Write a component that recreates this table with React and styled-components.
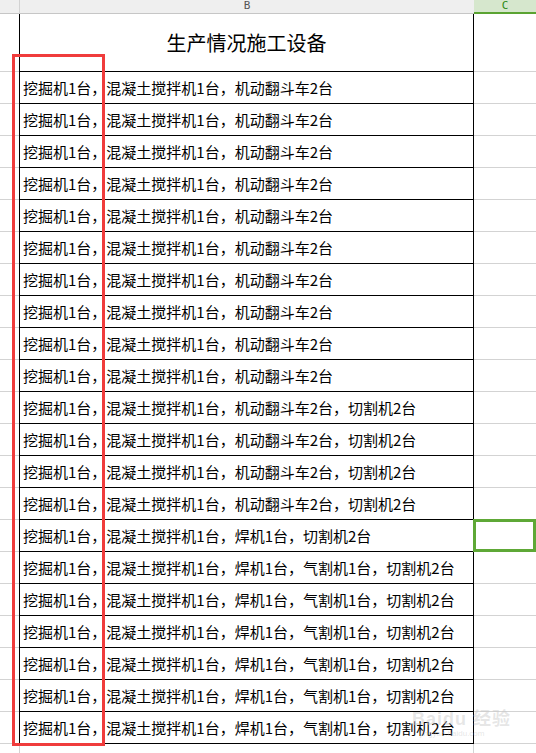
import React from "react";
import styled, { createGlobalStyle } from "styled-components";

const Global = createGlobalStyle`
  html, body { margin: 0; padding: 0; background: #fff; overflow: hidden; }
  body { width: 536px; height: 753px; }
`;

const Sheet = styled.div`
  position: relative;
  width: 536px;
  height: 753px;
  overflow: hidden;
  background: #fff;
  font-family: "Noto Sans CJK SC", "Liberation Sans", sans-serif;
`;

const Row = styled.div`
  display: grid;
  grid-template-columns: 19px 455px 1fr;
  height: ${(p) => p.$h}px;
`;

const HeadCell = styled.div`
  background: ${(p) => (p.$active ? "#d6e7cd" : "#efefef")};
  border-bottom: ${(p) => (p.$active ? "2px solid #5aa332" : "1px solid #c6c6c6")};
  border-left: ${(p) => (p.$divider ? "1px solid #d2d2d2" : "none")};
  color: ${(p) => (p.$active ? "#2f8a16" : "#555")};
  font-family: "DejaVu Sans Mono", "Liberation Mono", monospace;
  font-size: 11px;
  line-height: 12px;
  display: flex;
  justify-content: center;
  align-items: flex-start;
`;

const SideCell = styled.div`
  border-bottom: 1px solid ${(p) => (p.$last ? "transparent" : "#d3d3d3")};
  position: relative;
`;

const MainCell = styled.div`
  border-left: 1px solid ${(p) => (p.$ghost ? "#d3d3d3" : "#000")};
  border-right: 1px solid ${(p) => (p.$ghost ? "#d3d3d3" : "#000")};
  border-bottom: 1px solid ${(p) => (p.$ghost ? "transparent" : "#000")};
  display: flex;
  align-items: center;
  justify-content: ${(p) => (p.$title ? "center" : "flex-start")};
  padding-left: ${(p) => (p.$title ? "0" : "3px")};
  font-size: ${(p) => (p.$title ? "20px" : "15px")};
  color: #000;
  white-space: nowrap;
  overflow: hidden;
  letter-spacing: 0;
`;

const Selected = styled.div`
  position: absolute;
  left: -1px;
  top: -1px;
  right: 0;
  bottom: -1px;
  border: 3px solid #5ea836;
  pointer-events: none;
`;

const Highlight = styled.div`
  position: absolute;
  left: 12px;
  top: 54px;
  width: 87px;
  height: 686px;
  border: 3px solid #f03c3c;
  pointer-events: none;
`;

const Watermark = styled.div`
  position: absolute;
  left: 412px;
  top: 710px;
  color: rgba(200, 200, 200, 0.45);
  font-family: "Liberation Sans", "Noto Sans CJK SC", sans-serif;
  pointer-events: none;
  line-height: 1;
`;

const Mark = styled.div`
  font-size: 18px;
  font-weight: bold;
  letter-spacing: 1px;
`;

const MarkSub = styled.div`
  font-size: 8px;
  margin-top: 2px;
  margin-left: 8px;
`;

const base = "挖掘机1台，混凝土搅拌机1台，";
const rows = [
  ...Array(10).fill(base + "机动翻斗车2台"),
  ...Array(4).fill(base + "机动翻斗车2台，切割机2台"),
  base + "焊机1台，切割机2台",
  ...Array(6).fill(base + "焊机1台，气割机1台，切割机2台"),
];

export default function App() {
  return (
    <Sheet>
      <Global />
      <Row $h={14}>
        <HeadCell />
        <HeadCell $divider>B</HeadCell>
        <HeadCell $active>C</HeadCell>
      </Row>
      <Row $h={58}>
        <SideCell />
        <MainCell $title>生产情况施工设备</MainCell>
        <SideCell />
      </Row>
      {rows.map((t, i) => (
        <Row $h={32} key={i}>
          <SideCell />
          <MainCell>{t}</MainCell>
          <SideCell>{i === 14 && <Selected />}</SideCell>
        </Row>
      ))}
      <Row $h={20}>
        <SideCell $last />
        <MainCell $ghost />
        <SideCell $last />
      </Row>
      <Highlight />
      <Watermark>
        <Mark>Baidu 经验</Mark>
        <MarkSub>jingyan.baidu.com</MarkSub>
      </Watermark>
    </Sheet>
  );
}
